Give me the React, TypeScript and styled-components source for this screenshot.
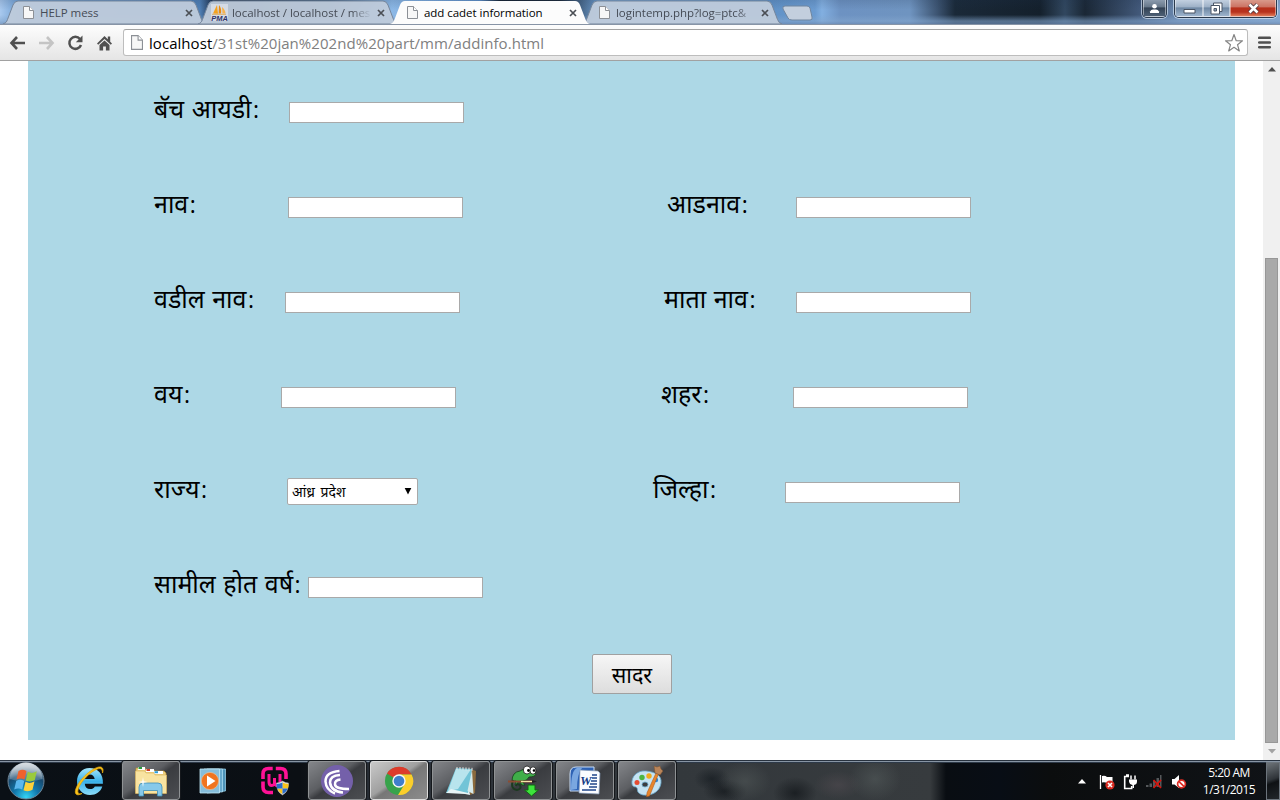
import React from 'react';
import styled, { createGlobalStyle, css } from 'styled-components';

const Global = createGlobalStyle`
  * { box-sizing: border-box; }
  html, body { margin: 0; padding: 0; background: #fff; overflow: hidden; }
  body { font-family: "Open Sans", "Noto Sans", sans-serif; }
  svg { display: block; flex: none; }
`;

const Screen = styled.div`
  width: 1280px;
  height: 800px;
  display: flex;
  flex-direction: column;
  overflow: hidden;
  background: #fff;
`;

/* ---------- title bar ---------- */

const TitleBar = styled.header`
  height: 24px;
  flex: none;
  display: flex;
  align-items: flex-start;
  justify-content: space-between;
  background:
    linear-gradient(180deg, rgba(30, 50, 80, 0.15) 0, transparent 40%, transparent 62%, rgba(130, 165, 205, 0.6) 88%, rgba(110, 140, 180, 0.7) 100%),
    linear-gradient(90deg, #a9c9ee 0, #6a9bd0 20px, #4f7fb5 200px, #17243a 215px, #33506f 330px, #8cb8e6 392px,
      #5c8cc4 480px, #15202e 500px, #1b2736 560px, #6f9fd2 600px, #5e8fc4 760px, #6b9bd0 815px, #82afe0 822px, #6d92c2 840px, #6f94c0 910px,
      #3b526f 938px, #1a2938 955px, #14202c 1040px, #31475f 1065px, #1a2735 1085px, #42597a 1140px, #6d8bb2 1180px, #84a6cf 1280px);
`;

const Tabs = styled.nav`
  display: flex;
  height: 24px;
  padding-left: 3px;
`;

const Tab = styled.div<{ $w: number; $active?: boolean; $lead?: number }>`
  position: relative;
  z-index: ${p => (p.$active ? 2 : 1)};
  width: ${p => p.$w}px;
  height: 24px;
  margin-right: -8px;
  padding: 1px 13px 0 ${p => p.$lead ?? 17}px;
  display: flex;
  align-items: center;
  color: ${p => (p.$active ? '#000' : '#454b55')};
`;

const TabShape = styled.svg`
  position: absolute;
  inset: 0;
  z-index: -1;
`;

const TabTitle = styled.span<{ $fade?: boolean }>`
  flex: 1;
  min-width: 0;
  margin: 0 6px;
  font-size: 11.5px;
  line-height: 16px;
  letter-spacing: -0.04px;
  white-space: nowrap;
  overflow: hidden;
  ${p => p.$fade && css`mask-image: linear-gradient(90deg, #000 86%, transparent 100%);`}
`;

const NewTab = styled.div`
  margin: 5px 0 0 8px;
`;

const Controls = styled.div`
  display: flex;
  padding-right: 3px;
`;

const ControlGroup = styled.div`
  display: flex;
  height: 18px;
  margin-left: 7px;
  border: 1px solid #2b3a4d;
  border-top: 0;
  border-radius: 0 0 5px 5px;
  box-shadow: 0 0 0 1px rgba(220, 235, 250, 0.65);
  overflow: hidden;
`;

const Control = styled.div<{ $w: number; $kind?: 'close' | 'user' }>`
  width: ${p => p.$w}px;
  height: 17px;
  display: flex;
  align-items: center;
  justify-content: center;
  border: 1px solid rgba(255, 255, 255, 0.45);
  border-top: 0;
  background: ${p =>
    p.$kind === 'close'
      ? 'linear-gradient(180deg, #d99a8b 0, #cc7464 42%, #b7301b 50%, #b8321d 75%, #e07a58 100%)'
      : p.$kind === 'user'
        ? 'linear-gradient(180deg, #8b9bad 0, #68798b 42%, #334355 50%, #4c5f74 100%)'
        : 'linear-gradient(180deg, #c2d0e0 0, #9fb2c8 42%, #6e87a3 50%, #9db4cd 100%)'};
`;

/* ---------- toolbar ---------- */

const Toolbar = styled.div`
  height: 37px;
  flex: none;
  display: flex;
  align-items: center;
  padding: 0 9px 0 9px;
  border-top: 1px solid #8794a6;
  border-bottom: 1px solid #a1a1a1;
  background: linear-gradient(180deg, #fdfdfd, #e5e5e5);
`;

const NavButtons = styled.div`
  display: flex;
  align-items: center;
  gap: 12px;
  margin-right: 10px;
`;

const Omnibox = styled.div`
  width: 1125px;
  height: 27px;
  display: flex;
  align-items: center;
  padding: 0 3px 0 7px;
  background: #fff;
  border: 1px solid #bdbdbd;
  border-top-color: #a3a3a3;
  border-radius: 3px;
`;

const Url = styled.span`
  flex: 1;
  margin-left: 6px;
  font-size: 15px;
  line-height: 20px;
  letter-spacing: 0.05px;
  color: #808080;
  white-space: nowrap;
`;

const Host = styled.span`
  color: #000;
`;

const MenuButton = styled.div`
  margin-left: 10px;
`;

/* ---------- page ---------- */

const Viewport = styled.main`
  height: 699px;
  flex: none;
  display: flex;
  justify-content: space-between;
  padding-left: 28px;
  background: #fff;
`;

const Form = styled.form`
  width: 1207px;
  height: 679px;
  padding: 4px 0 0 126px;
  background: #add8e6;
  font-family: "Noto Sans", "Noto Sans Devanagari", sans-serif;
`;

const Row = styled.div`
  height: 95px;
  display: flex;
  align-items: center;
`;

const LabelBox = styled.label<{ $w: number; $gap?: number }>`
  width: ${p => p.$w}px;
  margin-left: ${p => p.$gap ?? 0}px;
  padding-bottom: 9px;
  font-size: 25px;
  line-height: 34px;
  word-spacing: 1px;
  color: #000;
  white-space: nowrap;
`;

const Colon = styled.span`
  margin-left: 1.5px;
  font-family: "Open Sans", sans-serif;
  font-size: 23px;
`;

const TextInput = styled.input`
  width: 175px;
  height: 21px;
  margin: 0;
  padding: 1px;
  border: 1px solid #a9a9a9;
  border-radius: 0;
  background: #fff;
  outline: none;
`;

const SelectBox = styled.div`
  width: 131px;
  height: 27px;
  margin-bottom: 2px;
  padding: 1px 5px 0 4px;
  display: flex;
  align-items: center;
  justify-content: space-between;
  background: #fff;
  border: 1px solid #a9a9a9;
  border-radius: 2px;
  font-size: 14px;
  line-height: 22px;
  word-spacing: 2px;
  color: #000;
`;

const SubmitButton = styled.button`
  display: block;
  width: 80px;
  height: 40px;
  margin: 19px 0 0 438px;
  padding: 2px 0 0;
  border: 1px solid #a0a0a0;
  border-radius: 2px;
  background: linear-gradient(180deg, #f6f6f6, #dddddd);
  font-family: inherit;
  font-size: 21.5px;
  line-height: 30px;
  color: #000;
`;

const Scrollbar = styled.div`
  width: 17px;
  height: 699px;
  display: flex;
  flex-direction: column;
  align-items: center;
  background: #f0f0f0;
`;

const ScrollArrow = styled.div`
  height: 17px;
  display: flex;
  align-items: center;
`;

const Thumb = styled.div`
  width: 13px;
  height: 485px;
  margin-top: 180px;
  background: #a9a9a9;
  border: 1px solid #979797;
`;

/* ---------- taskbar ---------- */

const Taskbar = styled.footer`
  height: 40px;
  flex: none;
  display: flex;
  justify-content: space-between;
  border-top: 1px solid #28323f;
  box-shadow: inset 0 1px 0 #8794a3, inset 0 2px 0 #2d3948;
  background:
    radial-gradient(ellipse 26px 20px at 745px 20px, rgba(85, 92, 92, 0.5), transparent),
    radial-gradient(ellipse 22px 12px at 725px 30px, rgba(10, 14, 18, 0.6), transparent),
    radial-gradient(ellipse 22px 16px at 795px 32px, rgba(10, 14, 18, 0.6), transparent),
    radial-gradient(ellipse 26px 22px at 875px 18px, rgba(88, 96, 96, 0.5), transparent),
    radial-gradient(ellipse 24px 14px at 838px 24px, rgba(85, 78, 84, 0.5), transparent),
    radial-gradient(ellipse 18px 12px at 712px 18px, rgba(8, 14, 20, 0.5), transparent),
    linear-gradient(90deg, #0a1016 0, #0b0f14 300px, #2a3038 380px, #33383c 680px, #373b3e 930px, #090d12 946px, #080d15 1000px, #0b0d0e 1050px, #101317 1280px);
`;

const TaskItems = styled.div`
  display: flex;
  gap: 4px;
  margin-left: -2px;
`;

const Task = styled.div<{ $state?: 'open' | 'active'; $shift?: number }>`
  width: 58px;
  height: 39px;
  padding-right: ${p => p.$shift ?? 0}px;
  display: flex;
  align-items: center;
  justify-content: center;
  ${p =>
    p.$state &&
    css`
      border: 1px solid ${p.$state === 'active' ? '#dcdcdc' : '#8f9294'};
      border-radius: 3px;
      background: ${p.$state === 'active'
        ? 'linear-gradient(145deg, #c9c9c9 0, #a0a0a0 45%, #777 52%, #8c8c8c 100%)'
        : 'linear-gradient(145deg, #84868a 0, #5c5e62 42%, #3a3c40 52%, #4c4e52 100%)'};
      box-shadow: 0 0 0 1px #15181c;
    `}
`;

const Tray = styled.div`
  display: flex;
  align-items: center;
`;

const TrayIcons = styled.div`
  display: flex;
  align-items: center;
  gap: 8px;
  padding-top: 2px;
  margin-right: 14px;
`;

const Clock = styled.div`
  width: 56px;
  margin-right: 9px;
  padding-top: 1px;
  color: #fff;
  font-size: 12px;
  line-height: 17px;
  letter-spacing: -0.5px;
  text-align: center;
  white-space: nowrap;
`;

const ShowDesktop = styled.div`
  width: 14px;
  height: 38px;
  border: 1px solid #6c747c;
  background: linear-gradient(160deg, #6d7378 0, #2f3439 45%, #0e1114 55%, #22262a 100%);
`;

/* ---------- icons ---------- */

const PmaShift = styled.div`
  margin: 0 -2px 0 -4px;
`;

const PageIcon = ({ w = 11, h = 13, stroke = '#8c9096' }: { w?: number; h?: number; stroke?: string }) => (
  <svg width={w} height={h} viewBox="0 0 11 13" preserveAspectRatio="none">
    <path d="M.5.5h6l4 4v8H.5z" fill="#f7f7f7" stroke={stroke} />
    <path d="M6.5.5v4h4" fill="#fff" stroke={stroke} />
  </svg>
);

const PmaIcon = () => (
  <svg width="17" height="17" viewBox="0 0 17 17">
    <path fill="#d5dbe5" d="M0 0h17v17H0z" />
    <path d="M6 1L2 9.500l5 .2z" fill="#f5a11c" />
    <path d="M8 1q3 4 2 8.500H7.600z" fill="#e88b12" />
    <path d="M11 3q3.500 3 3.500 6.500H11.500z" fill="#f6b24c" />
    <path d="M1 10.300h14" stroke="#e0a040" strokeWidth=".8" />
    <text x="8.500" y="16.500" textAnchor="middle" fontFamily="Liberation Sans, sans-serif" fontWeight="700" fontStyle="italic" fontSize="7.500" fill="#2e3468">PMA</text>
  </svg>
);

const CloseX = ({ color = '#4b4f55' }: { color?: string }) => (
  <svg width="8" height="8" viewBox="0 0 8 8">
    <path d="M1 1l6 6M7 1L1 7" stroke={color} strokeWidth="1.700" />
  </svg>
);

const TabFace = ({ w, active }: { w: number; active?: boolean }) => (
  <TabShape width={w} height="24" viewBox={`0 0 ${w} 24`}>
    <path
      d={`M0 24 C3 23 3.500 22 4.500 19.500 L10 5 Q11.500 1.200 15 1 H${w - 15} Q${w - 11.500} 1.200 ${w - 10} 5 L${w - 4.500} 19.500 Q${w - 3} 23.500 ${w} 24 Z`}
      fill={active ? '#fcfcfc' : '#bfcbdb'}
      fillOpacity={active ? 1 : 0.95}
      stroke={active ? 'none' : '#75869c'}
    />
  </TabShape>
);

const BackIcon = ({ color = '#505050', flip }: { color?: string; flip?: boolean }) => (
  <svg width="17" height="14" viewBox="0 0 17 14">
    <g transform={flip ? 'translate(17 0) scale(-1 1)' : undefined} fill="none" stroke={color} strokeWidth="2.600">
      <path d="M8 1L2.500 7 8 13M2.500 7H16" />
    </g>
  </svg>
);

const ReloadIcon = () => (
  <svg width="17" height="16" viewBox="0 0 17 16">
    <path d="M13 4A6 6 0 1 0 14 10" fill="none" stroke="#505050" strokeWidth="2.500" />
    <path d="M15.500.5v6.700H8.800z" fill="#505050" />
  </svg>
);

const HomeIcon = () => (
  <svg width="17" height="16" viewBox="0 0 17 16">
    <path d="M8.500 1L1 8.500l1.200 1.200L8.500 4l6.300 5.700L16 8.500 14.200 6.700V1.500h-2.400v2.800z" fill="#505050" />
    <path d="M8.500 5.500L3.500 10v5.500h3.600v-4h2.800v4h3.600V10z" fill="#505050" />
  </svg>
);

const StarIcon = () => (
  <svg width="20" height="20" viewBox="0 0 20 20">
    <path d="M10 1.500l2.200 6.200 6.300.1-5 3.900 1.800 6.200L10 14.300l-5.300 3.600 1.800-6.200-5-3.900 6.300-.1z" fill="#fff" stroke="#858585" strokeWidth="1.200" strokeLinejoin="round" />
  </svg>
);

const HamburgerIcon = () => (
  <svg width="13" height="13" viewBox="0 0 13 13">
    <path d="M1.200 1.800h10.600M1.200 6.500h10.600M1.200 11.200h10.600" stroke="#505050" strokeWidth="2.600" strokeLinecap="round" />
  </svg>
);

const StartOrb = () => (
  <svg width="40" height="38" viewBox="0 0 40 38">
    <defs>
      <radialGradient id="orb" cx="50%" cy="95%" r="85%">
        <stop offset="0" stopColor="#35d5f5" />
        <stop offset=".4" stopColor="#1278ac" />
        <stop offset=".75" stopColor="#174a70" />
        <stop offset="1" stopColor="#71889c" />
      </radialGradient>
      <linearGradient id="orbShine" x2="0" y2="1">
        <stop stopColor="#fff" stopOpacity=".75" />
        <stop offset="1" stopColor="#fff" stopOpacity=".15" />
      </linearGradient>
    </defs>
    <circle cx="20" cy="19" r="18" fill="url(#orb)" stroke="#6d8496" />
    <path d="M3.500 17A16.500 16.500 0 0 1 36.500 17Q20 22 3.500 17z" fill="url(#orbShine)" />
    <g transform="translate(1 0)">
      <path d="M11.500 9q4-2.500 8 0L17.500 17.500q-4-2-8 0z" fill="#f0622c" />
      <path d="M20.800 9.800q4 2.500 9-.5L27.800 18q-4 2.500-9 .5z" fill="#9aca3c" />
      <path d="M9.200 19q4-2.500 8 0L15.200 27.500q-4-2-8 0z" fill="#5cb7ee" />
      <path d="M18.500 19.800q4 2.500 9-.5l-2 8.500q-4 2.500-9 .5z" fill="#fdd13a" />
    </g>
  </svg>
);

const IeIcon = () => (
  <svg width="32" height="32" viewBox="0 0 32 32">
    <defs>
      <linearGradient id="ie" x2="0" y2="1">
        <stop stopColor="#a4e6fb" />
        <stop offset=".5" stopColor="#3ab1ea" />
        <stop offset="1" stopColor="#8cdcfa" />
      </linearGradient>
    </defs>
    <path d="M16.500 3C9 3 4 9 4 16.500S9.500 30 17 30c6 0 10.500-3 12.300-8.500h-7.500c-1 1.800-2.500 2.600-4.600 2.600-3.200 0-5.200-2-5.400-5.300h18.100C30.500 9 25 3 16.500 3zm-4.700 11c.5-2.800 2.300-4.600 5-4.600s4.500 1.800 4.900 4.600z" fill="url(#ie)" />
    <path d="M29.500 8C31 4 29.500 1 25 2.200 17 4.400 6 15 3 23.500 1 29 3.500 31.500 9 28.500c-4 1-5-1-3.600-5C8 16 17.500 6.500 24.500 4c3.500-1.200 5 .5 5 4z" fill="#fbc51b" stroke="#e0a40c" strokeWidth=".8" />
  </svg>
);

const ExplorerIcon = () => (
  <svg width="34" height="32" viewBox="0 0 34 32">
    <path d="M2 3h9l1 2h8l1 1h9l2 2v20H2z" fill="#edd07e" stroke="#b98f35" strokeWidth=".7" />
    <path d="M4 2h7v3H4z" fill="#fff" /><path d="M4.500 2h3.500v2H4.500z" fill="#2a9c3b" />
    <path d="M12 4h8v3h-8z" fill="#fff" /><path d="M12.500 4H16v2h-3.500z" fill="#cf3d28" />
    <path d="M20 6h9v3h-9z" fill="#fff" /><path d="M20.500 6.200H24v2h-3.500z" fill="#2d9fd8" />
    <path d="M1.500 6h9l1.500 2h8l1 2h11.500v18.500h-31z" fill="#f8e3a0" stroke="#d8b45f" strokeWidth=".6" />
    <path d="M5 31V22q0-4 4-4h15q4 0 4 4v9h-4.500v-5.500h-14V31z" fill="#86c9ea" stroke="#3f8fb9" strokeWidth=".8" />
    <path d="M9 12l.8 4.200 4.200.8-4.200.8L9 22l-.8-4.200L4 17l4.200-.8z" fill="#fff" fillOpacity=".9" />
  </svg>
);

const WmpIcon = () => (
  <svg width="28" height="26" viewBox="0 0 28 26">
    <path d="M8 1h18.500v22L8 25z" fill="#4d93b8" stroke="#9fd7ef" strokeWidth=".7" />
    <path d="M5 1h18.500v23H5z" fill="#67a9cc" stroke="#b5e2f5" strokeWidth=".7" />
    <path d="M1 1h19.500v24H1z" fill="#86bedb" stroke="#c1e9f8" strokeWidth=".8" />
    <circle cx="11" cy="13" r="8.600" fill="#f0741f" stroke="#fbc08a" strokeWidth=".6" />
    <path d="M8 7.500l8.500 5.500L8 18.500z" fill="#fff" />
  </svg>
);

const WampIcon = () => (
  <svg width="30" height="32" viewBox="0 0 30 32">
    <g fill="none" stroke="#ff1296" strokeWidth="3.600">
      <path d="M12.700 3.500H8.500Q3 3.500 3 9v5M15.800 3.500h4.700Q26 3.500 26 9v5M3 16.500V22q0 5.500 5.500 5.500H13" />
      <path d="M9 9V17q0 3.500 2.800 3.500t2.700-3.500v-4 4q0 3.500 2.800 3.500T20 17V9" strokeWidth="3" />
    </g>
    <path d="M22.500 16q3 2 6 2 0 9-6 12-6-3-6-12 3 0 6-2z" fill="#e8e8e8" stroke="#aaa" strokeWidth=".5" />
    <path d="M22.500 17.500v6H28q.5-2 .5-4.500-3.500-.3-6-1.500zM22.500 23.500V29q-4-2-5-5.500z" fill="#f9c31d" />
    <path d="M22.500 17.500v6H17q-.5-2-.5-4.500 3.500-.3 6-1.500zM22.500 23.500V29q4-2 5-5.500z" fill="#2b6cc8" />
  </svg>
);

const TorrentIcon = () => (
  <svg width="32" height="32" viewBox="0 0 32 32">
    <circle cx="16" cy="16" r="16" fill="#7460aa" />
    <g fill="none" stroke="#fff" strokeWidth="2.500">
      <path d="M18.500 6Q4.500 7 4.500 16.500 5 25 14 28.500" />
      <path d="M19 10Q9 10.500 9 17.500 10 26.500 22 27.500" />
      <path d="M19.500 14.500q-6 .5-5.500 5t14 4.500" />
    </g>
  </svg>
);

const ChromeIcon = () => (
  <svg width="30" height="30" viewBox="0 0 30 30">
    <circle cx="15" cy="15" r="14" fill="#37a34b" />
    <path d="M15 15L3 7.600A14 14 0 0 1 27.500 8.500H15z" fill="#dd3b2c" />
    <path d="M15 8.500h12.600A14 14 0 0 1 14 29l6.500-10.700z" fill="#fbce2b" />
    <circle cx="15" cy="15" r="6.700" fill="#f6f6f6" />
    <circle cx="15" cy="15" r="5.300" fill="#3f7ecb" />
  </svg>
);

const NotepadIcon = () => (
  <svg width="32" height="32" viewBox="0 0 32 32">
    <path d="M26 4l5 2-1 22-5 2z" fill="#8b6a3c" />
    <path d="M11 3l16 1-3 24H1z" fill="#72c4d7" />
    <path d="M11 4l14.500 1L13 24 3 26z" fill="#b8e4ed" />
    <path d="M1 28l5-4 17 4 1-4 1 6-5-1z" fill="#e8f5f7" />
    <path d="M27 5l1.500 24-6-3z" fill="#d5e9ea" />
    <path d="M12 2v3M15 2v3M18 2.200v3M21 2.400v3M24 2.600v3M27 2.800v3" stroke="#e5e5e5" strokeWidth="1" />
  </svg>
);

const ChameleonIcon = () => (
  <svg width="32" height="32" viewBox="0 0 32 32">
    <path d="M5 16Q5 7 13 6l4-2 9 3 3 2q-1 3-7 3-2 4-6 4 0 2 2 4h-3l-3-4-3 4H8l1-4z" fill="#3fae49" stroke="#15411a" strokeWidth=".8" />
    <path d="M6 15q-3 9 4 10 5-1 3-5-3-2-4 1" fill="none" stroke="#1c3a20" strokeWidth="2" />
    <path d="M1 16.500h25" stroke="#8d4c32" strokeWidth="2" /><path d="M14 16.500h12" stroke="#f4e4a8" strokeWidth="1.200" /><path d="M25 15l5 1.500-5 1.500z" fill="#222" />
    <ellipse cx="20" cy="5" rx="3.700" ry="4" fill="#fff" stroke="#111" strokeWidth=".8" />
    <ellipse cx="26" cy="5.500" rx="3" ry="3.700" fill="#fff" stroke="#111" strokeWidth=".8" />
    <circle cx="21.500" cy="5.500" r="1.400" /><circle cx="27" cy="5.500" r="1.300" />
    <path d="M21 20h7v5h3.500L24.500 31 17.500 25H21z" fill="#3de33b" stroke="#126714" />
  </svg>
);

const WordIcon = () => (
  <svg width="32" height="30" viewBox="0 0 32 30">
    <path d="M7 1h18v24H1V8q0-7 6-7z" fill="#2e62b4" stroke="#c8dcf5" />
    <path d="M8 2Q2 4 2 24l6-1Q8 8 13 2z" fill="#7aa7e0" />
    <path d="M11 4l18 1 2 2-1 21-20-1z" fill="#fafcff" stroke="#8197b5" strokeWidth=".7" />
    <path d="M23 9h5M23 12h5M22 15h6M21 18h7M20 21h8M13 24h14" stroke="#20468a" strokeWidth="1.600" />
    <text x="11" y="19" fontFamily="Liberation Serif, serif" fontStyle="italic" fontWeight="700" fontSize="13" fill="#173d86">W</text>
  </svg>
);

const PaintIcon = () => (
  <svg width="34" height="32" viewBox="0 0 34 32">
    <path d="M16 6C7 5 1 12 2 19c1 4 4 2 5 4s-1 5 6 7c10 1 17-4 18-12S25 7 16 6zm-1 11a3 2.500 0 1 1 0 5 3 2.500 0 1 1 0-5z" fill="#c5e3f3" stroke="#6aa8cb" strokeWidth=".8" fillRule="evenodd" />
    <circle cx="7" cy="17.500" r="2.500" fill="#e64d32" /><circle cx="12" cy="12.500" r="2.700" fill="#4bb543" /><circle cx="19" cy="11" r="2.700" fill="#f1aa1d" /><circle cx="26" cy="15" r="2.200" fill="#2f83d0" />
    <path d="M26 8l2.500 1L19.500 31l-3 .8.500-4z" fill="#e7852c" stroke="#a65314" strokeWidth=".5" />
    <path d="M24 1l3 1 3-1 1 3 2 2-3 4-5-2z" fill="#b98459" stroke="#7b5330" strokeWidth=".5" />
  </svg>
);

const TrayUp = styled.svg`
  margin-right: 5px;
`;

const FlagIcon = () => (
  <svg width="16" height="16" viewBox="0 0 16 16">
    <path d="M1.500 1v14" stroke="#fff" strokeWidth="1.300" />
    <path d="M3 2q3-1 5 1h5.500v6H8Q6 8 3 8.500z" fill="#fff" />
    <circle cx="11" cy="11" r="4.600" fill="#d92b21" />
    <path d="M9 9l4 4M13 9l-4 4" stroke="#fff" strokeWidth="1.600" />
  </svg>
);

const PowerIcon = () => (
  <svg width="15" height="16" viewBox="0 0 15 16">
    <path d="M6 2.500H1.700v12h7V12M3 1h3" fill="none" stroke="#fff" strokeWidth="1.600" />
    <path d="M6 5.500h8v2q0 3-3 3.500v3H9.500v-3q-3-.5-3.500-3.500z" fill="#fff" />
    <path d="M8 1.500v4M12 1.500v4" stroke="#fff" strokeWidth="1.500" />
  </svg>
);

const NetworkIcon = () => (
  <svg width="17" height="15" viewBox="0 0 17 15">
    <path d="M0 11h2.500v2H0zM3.500 9.500H6V13H3.500zM7 7h2.500v6H7zM10.500 4H13v9h-2.500zM14 1h1.500v12H14z" fill="#55585b" />
    <path d="M7.500 6l7.500 8M15 6l-7.500 8" stroke="#d8130b" strokeWidth="1.700" />
  </svg>
);

const VolumeIcon = () => (
  <svg width="16" height="16" viewBox="0 0 16 16">
    <path d="M1 5h2.500L8 1v13L3.500 10.500H1z" fill="#fff" />
    <circle cx="10.500" cy="10" r="3.900" fill="#fff" stroke="#dd2b22" strokeWidth="1.700" />
    <path d="M7.800 7.300l5.400 5.400" stroke="#dd2b22" strokeWidth="1.700" />
  </svg>
);

/* ---------- composition ---------- */

const Label = ({ w, gap, text }: { w: number; gap?: number; text: string }) => (
  <LabelBox $w={w} $gap={gap}>
    {text}
    <Colon>:</Colon>
  </LabelBox>
);

const App = () => (
  <Screen>
    <Global />
    <TitleBar>
      <Tabs>
        <Tab $w={203} $lead={20}>
          <TabFace w={203} />
          <PageIcon />
          <TabTitle>HELP mess</TabTitle>
          <CloseX />
        </Tab>
        <Tab $w={200}>
          <TabFace w={200} />
          <PmaShift><PmaIcon /></PmaShift>
          <TabTitle $fade>localhost / localhost / mes</TabTitle>
          <CloseX />
        </Tab>
        <Tab $w={200} $active>
          <TabFace w={200} active />
          <PageIcon />
          <TabTitle>add cadet information</TabTitle>
          <CloseX />
        </Tab>
        <Tab $w={200}>
          <TabFace w={200} />
          <PageIcon />
          <TabTitle $fade>logintemp.php?log=ptc&amp;</TabTitle>
          <CloseX />
        </Tab>
        <NewTab>
          <svg width="31" height="16" viewBox="0 0 31 16">
            <path d="M3 1h22q2 0 3 2l2 9q1 3-2 3H10q-3 0-4-2L1 4Q0 1 3 1z" fill="#c3cfde" stroke="#6f859f" />
          </svg>
        </NewTab>
      </Tabs>
      <Controls>
        <ControlGroup>
          <Control $w={23} $kind="user">
            <svg width="11" height="11" viewBox="0 0 11 11"><circle cx="5.500" cy="3.300" r="2.300" fill="#fff" /><path d="M1 10V8.500q1-2 3-2h3q2 0 3 2V10z" fill="#fff" /></svg>
          </Control>
        </ControlGroup>
        <ControlGroup>
          <Control $w={28}>
            <svg width="13" height="11" viewBox="0 0 13 11"><path d="M1 6.500h11v3.500H1z" fill="#fff" stroke="#4a5565" /></svg>
          </Control>
          <Control $w={27}>
            <svg width="13" height="13" viewBox="0 0 13 13"><path d="M3.500 1h8.500v8.500H3.500z" fill="#fff" stroke="#4a5565" /><path d="M1 3.500h8.500V12H1z" fill="#fff" stroke="#4a5565" /><path d="M4 6.500h2.500V9H4z" fill="#8ea1b8" stroke="#4a5565" /></svg>
          </Control>
          <Control $w={46} $kind="close">
            <svg width="13" height="11" viewBox="0 0 13 11"><path d="M2.500 1.500l8 8M10.500 1.500l-8 8" stroke="#4d3b43" strokeWidth="4.200" /><path d="M2.500 1.500l8 8M10.500 1.500l-8 8" stroke="#fff" strokeWidth="2.500" /></svg>
          </Control>
        </ControlGroup>
      </Controls>
    </TitleBar>

    <Toolbar>
      <NavButtons>
        <BackIcon />
        <BackIcon color="#c4c4c4" flip />
        <ReloadIcon />
        <HomeIcon />
      </NavButtons>
      <Omnibox>
        <PageIcon w={12} h={15} />
        <Url><Host>localhost</Host>/31st%20jan%202nd%20part/mm/addinfo.html</Url>
        <StarIcon />
      </Omnibox>
      <MenuButton><HamburgerIcon /></MenuButton>
    </Toolbar>

    <Viewport>
      <Form>
        <Row>
          <Label w={135} text="बॅच आयडी" /><TextInput />
        </Row>
        <Row>
          <Label w={134} text="नाव" /><TextInput />
          <Label w={129} gap={204} text="आडनाव" /><TextInput />
        </Row>
        <Row>
          <Label w={131} text="वडील नाव" /><TextInput />
          <Label w={132} gap={204} text="माता नाव" /><TextInput />
        </Row>
        <Row>
          <Label w={127} text="वय" /><TextInput />
          <Label w={132} gap={205} text="शहर" /><TextInput />
        </Row>
        <Row>
          <Label w={133} text="राज्य" />
          <SelectBox>
            <span>आंध्र प्रदेश</span>
            <svg width="8" height="8" viewBox="0 0 8 8"><path d="M.7 0h6.600L4 6.500z" fill="#000" /></svg>
          </SelectBox>
          <Label w={132} gap={235} text="जिल्हा" /><TextInput />
        </Row>
        <Row>
          <Label w={154} text="सामील होत वर्ष" /><TextInput />
        </Row>
        <SubmitButton type="button">सादर</SubmitButton>
      </Form>
      <Scrollbar>
        <ScrollArrow><svg width="8" height="5" viewBox="0 0 8 5"><path d="M4 0l4 4.500H0z" fill="#505050" /></svg></ScrollArrow>
        <Thumb />
        <ScrollArrow><svg width="8" height="5" viewBox="0 0 8 5"><path d="M0 0h8L4 4.500z" fill="#a3a3a3" /></svg></ScrollArrow>
      </Scrollbar>
    </Viewport>

    <Taskbar>
      <TaskItems>
        <Task $shift={2}><StartOrb /></Task>
        <Task><IeIcon /></Task>
        <Task $state="open"><ExplorerIcon /></Task>
        <Task><WmpIcon /></Task>
        <Task><WampIcon /></Task>
        <Task $state="open"><TorrentIcon /></Task>
        <Task $state="active"><ChromeIcon /></Task>
        <Task $state="open"><NotepadIcon /></Task>
        <Task $state="open"><ChameleonIcon /></Task>
        <Task $state="open"><WordIcon /></Task>
        <Task $state="open"><PaintIcon /></Task>
      </TaskItems>
      <Tray>
        <TrayIcons>
          <TrayUp width="8" height="5" viewBox="0 0 8 5"><path d="M4 0l4 4.500H0z" fill="#fff" /></TrayUp>
          <FlagIcon />
          <PowerIcon />
          <NetworkIcon />
          <VolumeIcon />
        </TrayIcons>
        <Clock>
          <div>5:20 AM</div>
          <div>1/31/2015</div>
        </Clock>
        <ShowDesktop />
      </Tray>
    </Taskbar>
  </Screen>
);

export default App;
